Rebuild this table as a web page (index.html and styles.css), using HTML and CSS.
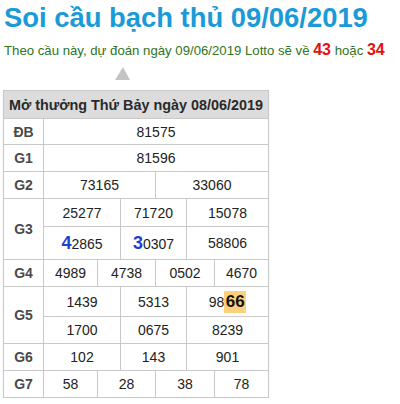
FILE: index.html
```html
<!DOCTYPE html>
<html lang="vi">
<head>
<meta charset="utf-8">
<title>Soi cầu bạch thủ 09/06/2019</title>
<link rel="stylesheet" href="styles.css">
</head>
<body>
<div class="page">
  <h1 class="title">Soi cầu bạch thủ 09/06/2019</h1>
  <p class="lead">Theo cầu này, dự đoán ngày 09/06/2019 Lotto sẽ về <b class="hot">43</b> hoặc <b class="hot">34</b></p>
  <div class="arrow"></div>
  <div class="kq">
    <div class="head">Mở thưởng Thứ Bảy ngày 08/06/2019</div>

    <div class="lab">ĐB</div>
    <div class="num s6">81575</div>

    <div class="lab">G1</div>
    <div class="num s6">81596</div>

    <div class="lab">G2</div>
    <div class="num s3">73165</div>
    <div class="num s3">33060</div>

    <div class="lab r2">G3</div>
    <div class="num s2">25277</div>
    <div class="num s2">71720</div>
    <div class="num s2">15078</div>
    <div class="num s2"><span class="val"><span class="big">4</span>2865</span></div>
    <div class="num s2"><span class="val"><span class="big">3</span>0307</span></div>
    <div class="num s2">58806</div>

    <div class="lab">G4</div>
    <div class="num">4989</div>
    <div class="num s2">4738</div>
    <div class="num s2">0502</div>
    <div class="num">4670</div>

    <div class="lab r2">G5</div>
    <div class="num s2">1439</div>
    <div class="num s2">5313</div>
    <div class="num s2"><span class="val">98<span class="mark">66</span></span></div>
    <div class="num s2">1700</div>
    <div class="num s2">0675</div>
    <div class="num s2">8239</div>

    <div class="lab">G6</div>
    <div class="num s2">102</div>
    <div class="num s2">143</div>
    <div class="num s2">901</div>

    <div class="lab">G7</div>
    <div class="num">58</div>
    <div class="num s2">28</div>
    <div class="num s2">38</div>
    <div class="num">78</div>
  </div>
</div>
</body>
</html>
```

FILE: styles.css
```css
html, body {
  margin: 0;
  padding: 0;
  background: #fff;
}

body {
  font-family: "Liberation Sans", Arial, sans-serif;
  color: #222;
}

.page {
  padding: 2px 3px 0 3px;
}

.title {
  margin: 0 0 0 1px;
  font-size: 27.4px;
  line-height: 32px;
  font-weight: bold;
  color: #1b9ad8;
}

.lead {
  margin: 6px 0 0 1px;
  font-size: 13.2px;
  line-height: 20px;
  color: #2f7420;
}

.hot {
  font-size: 16px;
  color: #e3120f;
}

.arrow {
  width: 0;
  height: 0;
  margin: 6px 0 0 112px;
  border-left: 8px solid transparent;
  border-right: 7px solid transparent;
  border-bottom: 13px solid #c4c4c4;
}

.kq {
  display: grid;
  grid-template-columns: 39px 53px 22px 34px 30px 27px 53px;
  grid-template-rows: 27px 25px 26px 26px 27px 32px 26px 29px 26px 26px 26px;
  gap: 1px;
  width: max-content;
  margin-top: 10px;
  background: #c9c9c9;
  border: 1px solid #c9c9c9;
  box-shadow: 0 1px 1px rgba(0, 0, 0, 0.18);
}

.kq > div {
  display: flex;
  align-items: center;
  justify-content: center;
  background: #fff;
  white-space: nowrap;
}

.kq > .head {
  grid-column: 1 / -1;
  background: #dcdcdc;
  font-size: 14.4px;
  font-weight: bold;
  color: #2a2a2a;
}

.lab {
  font-size: 14px;
  font-weight: bold;
  color: #4a4a4a;
}

.r2 {
  grid-row: span 2;
}

.num {
  font-size: 14px;
  color: #222;
}

.s2 {
  grid-column: span 2;
}

.s3 {
  grid-column: span 3;
}

.s6 {
  grid-column: span 6;
}

.val {
  display: block;
}

.big {
  font-size: 18px;
  font-weight: bold;
  color: #1f3fcf;
}

.mark {
  display: inline-block;
  padding: 0 1.5px;
  font-size: 17px;
  line-height: 22px;
  font-weight: bold;
  color: #111;
  background: #fcd07d;
}
```
